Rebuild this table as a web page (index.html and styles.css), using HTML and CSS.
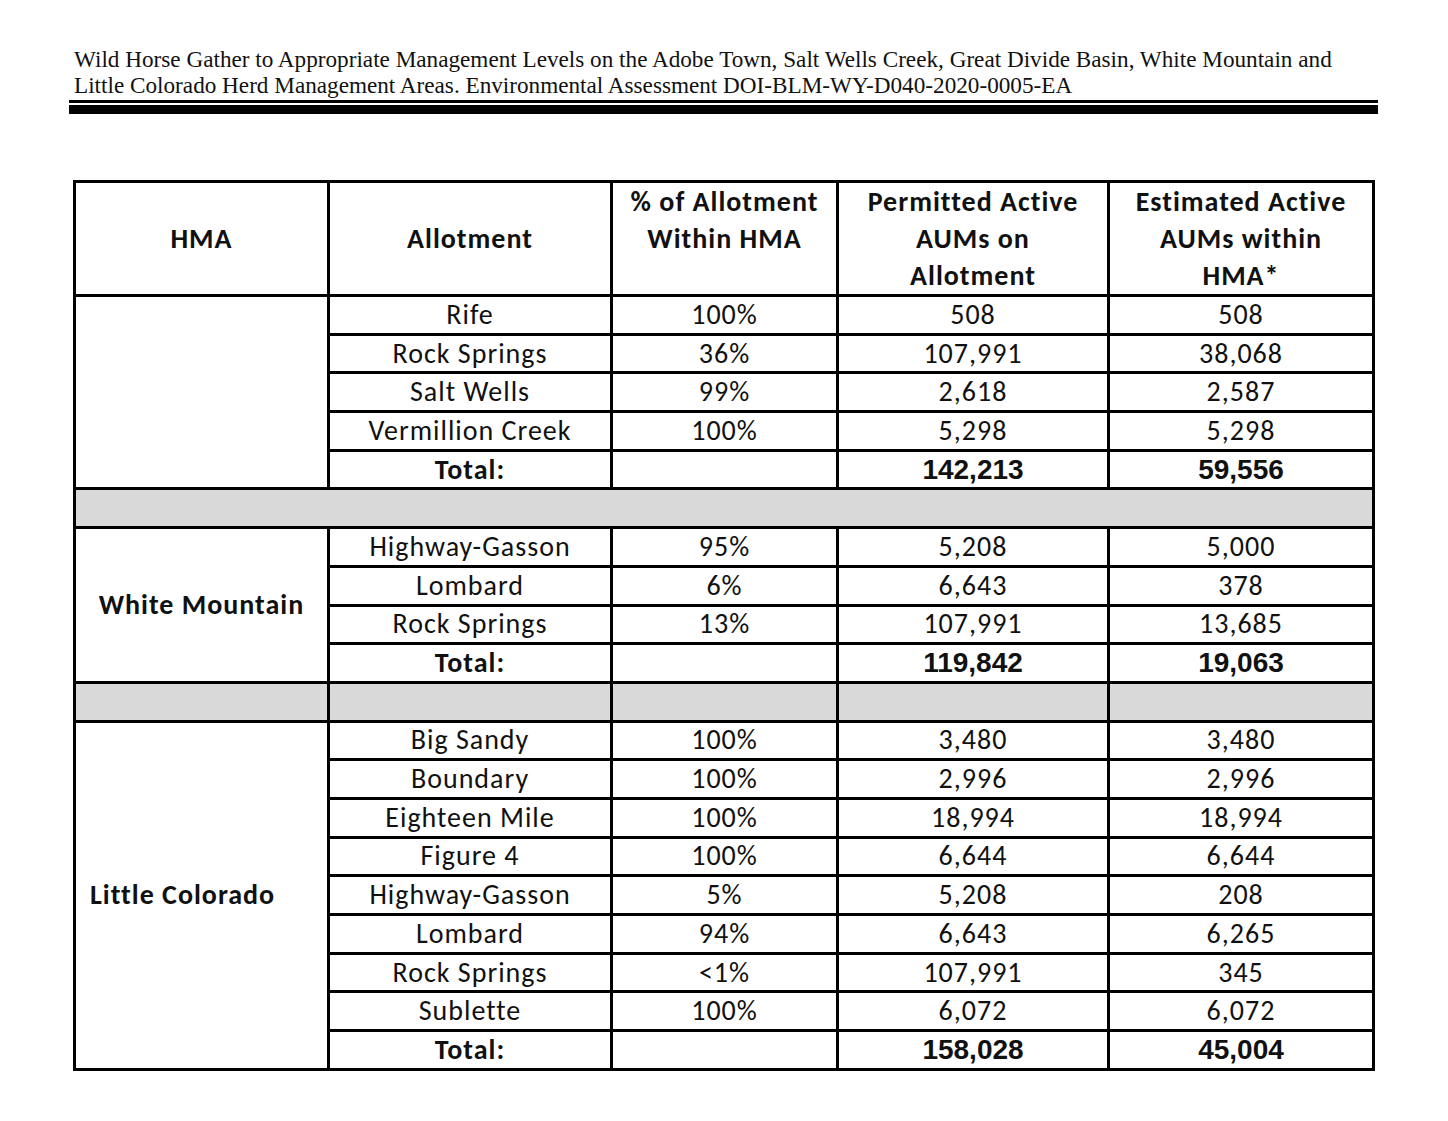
FILE: index.html
```html
<!DOCTYPE html>
<html>
<head>
<meta charset="utf-8">
<link rel="stylesheet" href="styles.css">
</head>
<body>
<div class="page">
  <header class="doc-header">
    <p class="doc-title">Wild Horse Gather to Appropriate Management Levels on the Adobe Town, Salt Wells Creek, Great Divide Basin, White Mountain and<br>Little Colorado Herd Management Areas. Environmental Assessment DOI-BLM-WY-D040-2020-0005-EA</p>
    <div class="rule-thin"></div>
    <div class="rule-thick"></div>
  </header>

  <table class="aum-table">
    <colgroup>
      <col class="c1"><col class="c2"><col class="c3"><col class="c4"><col class="c5">
    </colgroup>
    <thead>
      <tr class="head-row">
        <th>HMA</th>
        <th>Allotment</th>
        <th class="top">% of Allotment<br>Within HMA</th>
        <th>Permitted Active<br>AUMs on<br>Allotment</th>
        <th>Estimated Active<br>AUMs within<br>HMA*</th>
      </tr>
    </thead>
    <tbody>
      <tr><td class="hma" rowspan="5"></td><td>Rife</td><td>100%</td><td>508</td><td>508</td></tr>
      <tr><td>Rock Springs</td><td>36%</td><td>107,991</td><td>38,068</td></tr>
      <tr><td>Salt Wells</td><td>99%</td><td>2,618</td><td>2,587</td></tr>
      <tr><td>Vermillion Creek</td><td>100%</td><td>5,298</td><td>5,298</td></tr>
      <tr class="total"><td class="lbl">Total:</td><td></td><td class="num">142,213</td><td class="num">59,556</td></tr>
      <tr class="spacer"><td colspan="5"></td></tr>

      <tr><td class="hma" rowspan="4">White Mountain</td><td>Highway-Gasson</td><td>95%</td><td>5,208</td><td>5,000</td></tr>
      <tr><td>Lombard</td><td>6%</td><td>6,643</td><td>378</td></tr>
      <tr><td>Rock Springs</td><td>13%</td><td>107,991</td><td>13,685</td></tr>
      <tr class="total"><td class="lbl">Total:</td><td></td><td class="num">119,842</td><td class="num">19,063</td></tr>
      <tr class="spacer split"><td></td><td></td><td></td><td></td><td></td></tr>

      <tr><td class="hma lc" rowspan="9">Little Colorado</td><td>Big Sandy</td><td>100%</td><td>3,480</td><td>3,480</td></tr>
      <tr><td>Boundary</td><td>100%</td><td>2,996</td><td>2,996</td></tr>
      <tr><td>Eighteen Mile</td><td>100%</td><td>18,994</td><td>18,994</td></tr>
      <tr><td>Figure 4</td><td>100%</td><td>6,644</td><td>6,644</td></tr>
      <tr><td>Highway-Gasson</td><td>5%</td><td>5,208</td><td>208</td></tr>
      <tr><td>Lombard</td><td>94%</td><td>6,643</td><td>6,265</td></tr>
      <tr><td>Rock Springs</td><td>&lt;1%</td><td>107,991</td><td>345</td></tr>
      <tr><td>Sublette</td><td>100%</td><td>6,072</td><td>6,072</td></tr>
      <tr class="total"><td class="lbl">Total:</td><td></td><td class="num">158,028</td><td class="num">45,004</td></tr>
    </tbody>
  </table>
</div>
</body>
</html>
```

FILE: styles.css
```css
html, body {
  margin: 0;
  padding: 0;
  background: #ffffff;
}

.page {
  width: 1448px;
  height: 1121px;
  padding: 46px 0 0 0;
  box-sizing: border-box;
}

.doc-header {
  margin-left: 69px;
  width: 1309px;
}

.doc-title {
  margin: 0 0 0 5px;
  font-family: "Liberation Serif", "DejaVu Serif", serif;
  font-size: 23.2px;
  line-height: 26px;
  color: #111;
}

.rule-thin {
  height: 3px;
  background: #000;
  margin-top: 2px;
}

.rule-thick {
  height: 9px;
  background: #000;
  margin-top: 2px;
}

.aum-table {
  margin: 66px 0 0 73px;
  width: 1299px;
  table-layout: fixed;
  border-collapse: collapse;
  font-family: "Carlito", "Lato", "Open Sans", sans-serif;
  font-size: 28px;
  letter-spacing: 1px;
  color: #111;
}

.c1 { width: 254px; }
.c2 { width: 283px; }
.c3 { width: 226px; }
.c4 { width: 271px; }
.c5 { width: 265px; }

.aum-table th,
.aum-table td {
  border: 3px solid #000;
  padding: 0 4px;
  text-align: center;
  vertical-align: middle;
  line-height: 32px;
}

.aum-table tbody tr {
  height: 38.7px;
}

.head-row {
  height: 114px;
}

.aum-table th {
  font-weight: 700;
  line-height: 37px;
}

.aum-table th.top {
  vertical-align: top;
}

.hma {
  font-weight: 700;
}

.hma.lc {
  text-align: left;
  padding-left: 14px;
}

.total .lbl {
  font-weight: 700;
}

.total .num {
  font-family: "Liberation Sans", Arial, sans-serif;
  font-weight: 700;
  font-size: 28px;
  letter-spacing: 0;
}

.spacer td {
  background: #d9d9d9;
}

.spacer.split td {
  border-top: 3px solid #000;
}
```
